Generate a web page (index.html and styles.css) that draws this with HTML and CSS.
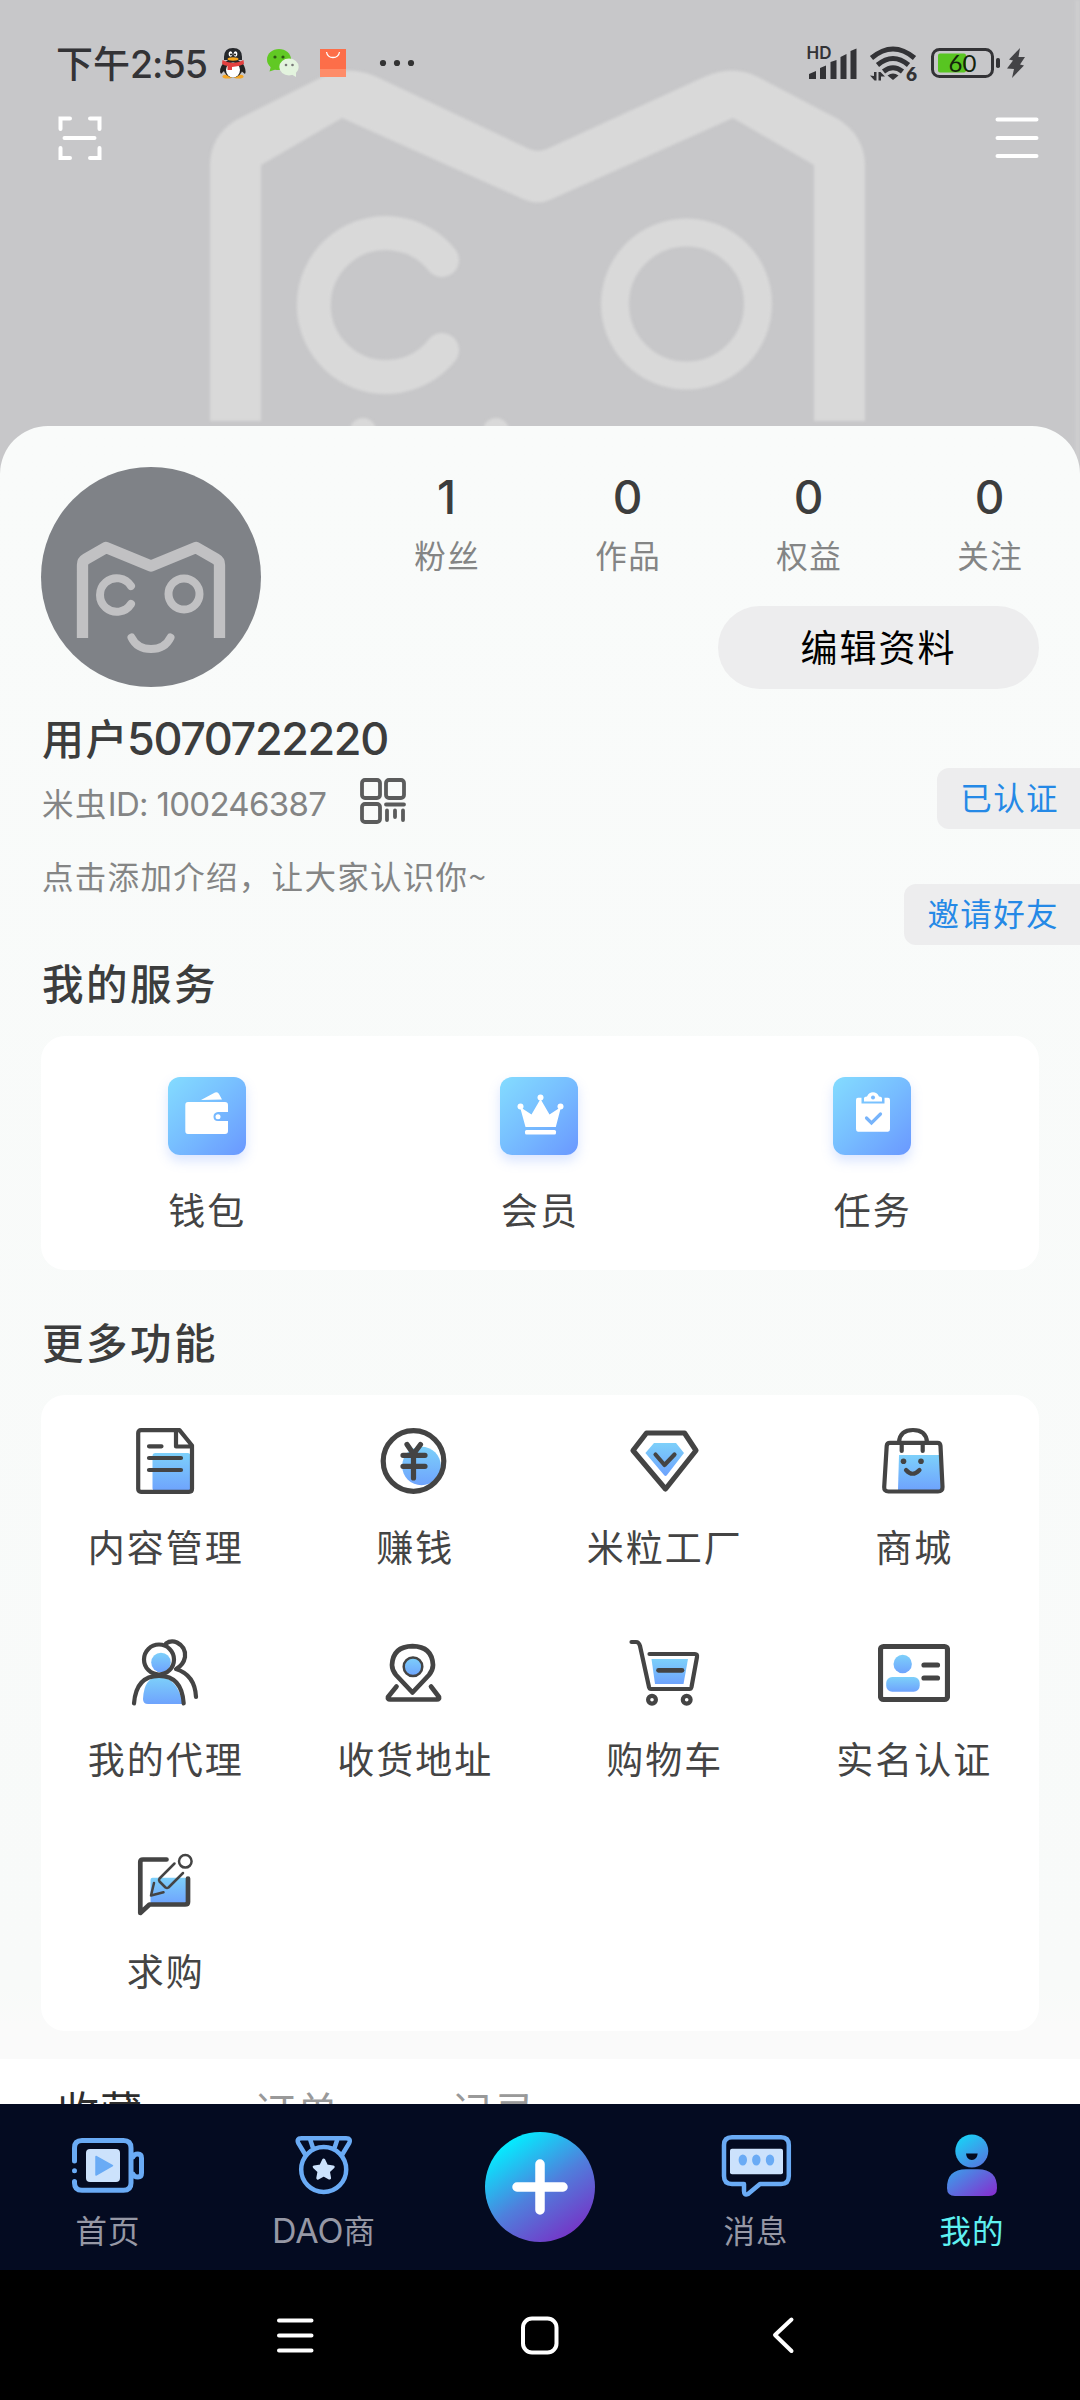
FILE: index.html
```html
<!DOCTYPE html>
<html lang="zh-CN">
<head>
<meta charset="utf-8">
<title>我的</title>
<link rel="stylesheet" href="styles.css">
</head>
<body>
<svg class="defs" width="0" height="0" aria-hidden="true">
  <defs>
    <linearGradient id="blue" x1="0" y1="0" x2="0" y2="1"><stop offset="0" stop-color="#7dd0fa"/><stop offset="1" stop-color="#6ea3fd"/></linearGradient>
    <linearGradient id="neon" gradientUnits="userSpaceOnUse" x1="16" y1="6" x2="58" y2="66"><stop offset="0" stop-color="#0fe0fa"/><stop offset="1" stop-color="#8430cf"/></linearGradient>
  </defs>
</svg>
<div class="phone">
  <header class="hero">
    <svg class="hero-art" viewBox="0 0 1080 480" fill="#d9d9d9">
      <path d="M210 421V166Q210 136 236 120L322 77Q349 64 377 77L527 148Q538 154 549 148L704 77Q733 64 758 77L838 119Q865 136 865 166V421H814V165L733 118L552 199Q538 206 523 199L342 118L261 165V421Z"/>
      <path d="M442 260A72 72 0 1 0 442 350" fill="none" stroke="#d9d9d9" stroke-width="34" stroke-linecap="round"/>
      <circle cx="686.500" cy="304" r="71.500" fill="none" stroke="#d9d9d9" stroke-width="28"/>
      <circle cx="363" cy="431" r="13"/><circle cx="496" cy="431" r="13"/>
      <path d="M1075 0H1080V480H1075Z" fill="#cdcdce"/>
    </svg>
    <div class="statusbar">
      <span class="clock">下午<span class="digits">2:55</span></span>
      <svg class="notif" width="200" height="36" viewBox="216 45 200 36">
        <path d="M224 62Q218 70 221 74L225 70ZM242 62Q247 70 245 74L240 70Z" fill="#222"/>
        <ellipse cx="227.500" cy="76.500" rx="5" ry="2" fill="#f5a623"/><ellipse cx="238.500" cy="76.500" rx="5" ry="2" fill="#f5a623"/>
        <ellipse cx="233" cy="68" rx="9.500" ry="9.500" fill="#222"/>
        <ellipse cx="233" cy="70" rx="7" ry="7.500" fill="#fff"/>
        <path d="M224 60V57Q224 48 233 48Q242 48 242 57V60Z" fill="#26282c"/>
        <ellipse cx="230.500" cy="54" rx="1.900" ry="2.700" fill="#fff"/><ellipse cx="235.500" cy="54" rx="1.900" ry="2.700" fill="#fff"/>
        <circle cx="231" cy="54.500" r=".9"/><circle cx="235" cy="54.500" r=".9"/>
        <path d="M222.500 60Q233 66 243.500 60L244 64Q238 67 232 67V70H227.500V66Q223 65 222 63.500Z" fill="#e2403f"/>
        <ellipse cx="233" cy="59" rx="5.500" ry="1.700" fill="#f7a51c"/>
        <ellipse cx="279" cy="59.500" rx="12" ry="10.500" fill="#61c924"/><path d="M271 66L269.500 71.500L277 69Z" fill="#61c924"/>
        <circle cx="275" cy="57" r="1.600" fill="#2d5a12"/><circle cx="283" cy="57" r="1.600" fill="#2d5a12"/>
        <ellipse cx="289" cy="67" rx="9.700" ry="8.500" fill="#e3f3de"/><path d="M291 74L296 77L296 71Z" fill="#e3f3de"/>
        <circle cx="286" cy="65" r="1.300" fill="#777"/><circle cx="292.500" cy="65" r="1.300" fill="#777"/>
        <path d="M320 49H346V77H320Z" fill="#fd6e49"/><path d="M320 69H346V77H320Z" fill="#fe8c69"/>
        <path d="M326.500 52Q327.500 57.500 333 57.500T339.500 52" fill="none" stroke="#fff" stroke-width="1.300"/>
        <circle cx="383" cy="63" r="3.100" fill="#333"/><circle cx="397" cy="63" r="3.100" fill="#333"/><circle cx="411" cy="63" r="3.100" fill="#333"/>
      </svg>
      <svg class="signals" width="224" height="40" viewBox="804 43 224 40" fill="#333336">
        <text x="806.500" y="59" class="t-hd">HD</text>
        <path d="M809 79V74L816 71V79ZM820 79V68L826 65.500V79ZM830.500 79V62L836.500 60V79ZM840.500 79V57L846.500 54V79ZM850.500 79V51L856.500 48.500V79Z"/>
        <g fill="none" stroke="#333336" stroke-width="5"><path d="M871.500 58Q893 40 914.500 58"/><path d="M877.500 65Q893 52 908.500 65"/><path d="M883.500 71.500Q893 64 902.500 71.500"/></g>
        <path d="M887.500 75.500Q893 71.500 898.500 75.500L893 80Z"/>
        <path d="M876.500 80.500V72H874V76L870 75.500L874.500 80.500ZM878.500 72V80.500H881V76.500L885 76.500L880.500 72Z"/>
        <text x="906" y="81" class="t-gen">6</text>
        <rect x="932.500" y="49.500" width="60" height="27" rx="7" fill="none" stroke="#333336" stroke-width="3"/>
        <rect x="938" y="53.500" width="28" height="19" rx="2" fill="#58c521"/>
        <rect x="996" y="58" width="4" height="10" rx="1.800"/>
        <text x="948.500" y="72" class="t-batt">60</text>
        <path d="M1020 48L1009 59.500L1013 60.500L1007 68.500L1014 69L1012 78L1024 65.500L1020 64.500L1025 57H1018.500Z" fill="#434346"/>
      </svg>
    </div>
    <div class="toolbar">
      <svg width="44" height="45" viewBox="0 0 44 45" fill="none" stroke="#fff" stroke-width="4" stroke-linecap="round"><path d="M2.500 13V2.500H12M32 2.500H41.500V13M2.500 32V42H12M32 42H41.500V32M6.500 22H36.500"/></svg>
      <svg width="44" height="45" viewBox="0 0 44 45" fill="none" stroke="#fff" stroke-width="4" stroke-linecap="round"><path d="M2.500 3.500H41.500M2.500 22H41.500M2.500 40H41.500"/></svg>
    </div>
  </header>

  <main class="sheet">
    <section class="top">
      <svg class="avatar" viewBox="0 0 220 220" fill="none" stroke="#c1c1c3">
        <circle cx="110" cy="110" r="110" fill="#7f8287" stroke="none"/>
        <path d="M41.500 171V98Q41.500 94 45 92L65 80.500L110 99L155 80.500L175 92Q178.500 94 178.500 98V171" stroke-width="11.300" stroke-linejoin="round"/>
        <path d="M90 119A16.800 16.800 0 1 0 90 137" stroke-width="8" stroke-linecap="round"/>
        <circle cx="143" cy="127" r="15.500" stroke-width="8"/>
        <path d="M90.500 170.500Q96 182 110 182T129.500 170.500" stroke-width="8" stroke-linecap="round"/>
      </svg>
      <div class="top-right">
        <div class="stats">
          <div class="stat"><b>1</b><span>粉丝</span></div>
          <div class="stat"><b>0</b><span>作品</span></div>
          <div class="stat"><b>0</b><span>权益</span></div>
          <div class="stat"><b>0</b><span>关注</span></div>
        </div>
        <div class="edit">编辑资料</div>
      </div>
    </section>
    <h1 class="name">用户<span class="digits">5070722220</span></h1>
    <section class="meta">
      <div class="meta-text">
        <div class="uid"><span class="uid-text">米虫<span class="digits">ID: 100246387</span></span>
          <svg width="46" height="46" viewBox="0 0 46 46" fill="none" stroke="#5b5c5c" stroke-width="3.800" stroke-linecap="round"><rect x="2" y="2" width="18" height="18" rx="3"/><rect x="26" y="2" width="18" height="18" rx="3"/><rect x="2" y="26" width="18" height="18" rx="3"/><path d="M26 26.500H44M27 32.500V42M35 32.500V39M43 32.500V42"/></svg>
        </div>
        <p class="bio">点击添加介绍，让大家认识你~</p>
      </div>
      <div class="badges"><span class="badge">已认证</span><span class="badge">邀请好友</span></div>
    </section>

    <h2 class="title">我的服务</h2>
    <section class="card services">
      <div class="service">
        <svg class="tile" viewBox="0 0 78 78" fill="#fff"><path d="M33 23L47 15.500Q50 14.500 51 17L54 22.500ZM20 25H57Q60 25 60 28V35H50Q45.500 35.500 45.500 39.700T50 44H60V54Q60 57 57 57H20Q17.300 57 17.300 54V28Q17.300 25 20 25Z"/><circle cx="50" cy="39.700" r="2.500"/></svg>
        <span>钱包</span>
      </div>
      <div class="service">
        <svg class="tile" viewBox="0 0 78 78" fill="#fff"><path d="M20 30L31.500 37.500L40.500 22L49.500 37.500L61 30L55.800 50H25.500Z"/><circle cx="20.500" cy="29.500" r="3"/><circle cx="40.500" cy="20.500" r="3"/><circle cx="60.500" cy="29.500" r="3"/><rect x="25" y="53" width="31" height="4.500" rx="1.500"/></svg>
        <span>会员</span>
      </div>
      <div class="service">
        <svg class="tile" viewBox="0 0 78 78"><path d="M25 20.700H28.500V26.500H51.500V20.700H55Q57 20.700 57 23V52Q57 54.700 55 54.700H25Q23 54.700 23 52V23Q23 20.700 25 20.700Z" fill="#fff"/><path d="M31 24.500V21.500Q31 19.500 34 19.500Q36 15.300 40 15.300T46 19.500Q49 19.500 49 21.500V24.500Z" fill="#fff"/><circle cx="40" cy="20.500" r="2" fill="#79baff"/><path d="M33.500 41L38.500 46L47.500 37" fill="none" stroke="#77b4fb" stroke-width="3.200" stroke-linecap="round"/></svg>
        <span>任务</span>
      </div>
    </section>

    <h2 class="title title-more">更多功能</h2>
    <section class="card features">
      <div class="feature">
        <svg viewBox="0 0 72 72"><rect class="tint" x="22.500" y="28" width="38" height="38" rx="3"/><path d="M11 5.200H49.500L62 20.500V64Q62 66.800 59 66.800H11Q8.200 66.800 8.200 64V8Q8.200 5.200 11 5.200ZM46 6V21.500H61M19 21.300H31.500M19 33H51M19 45H51"/></svg>
        <span>内容管理</span>
      </div>
      <div class="feature">
        <svg viewBox="0 0 72 72"><circle class="tint" cx="42.500" cy="41" r="19.300"/><g class="bold"><circle cx="34.500" cy="36" r="30.300"/><path d="M28 19.500L34.500 29L41.500 19.500M34.500 29V53M24 30.300H46M24 41.300H46"/></g></svg>
        <span>赚钱</span>
      </div>
      <div class="feature">
        <svg viewBox="0 0 72 72"><path class="tint" d="M25 18H47L55 28L38 50Q36.500 52 35 50L16.400 28Z"/><path class="bold" d="M17.500 8H55.500L67 25.500L36.500 64L4 25.500Z"/><path d="M26.500 29.500L35.500 40L45.500 29.500"/></svg>
        <span>米粒工厂</span>
      </div>
      <div class="feature">
        <svg viewBox="0 0 72 72"><path class="tint" d="M21 30H62L63 65H20Z"/><path d="M12 17.800H59.500Q62.300 17.800 62.500 21L64.500 62Q64.700 66.500 60 66.500H10.500Q6 66.500 6.200 62L8.700 21Q9 17.800 12 17.800ZM21 17Q22 5 35 5T49 17M23.700 18V26M44.700 18V26"/><circle class="dot" cx="25.500" cy="36.300" r="2.800"/><circle class="dot" cx="43" cy="36.300" r="2.800"/><path d="M28 45Q34.500 52.500 41.500 45"/></svg>
        <span>商城</span>
      </div>
      <div class="feature">
        <svg viewBox="0 0 72 72"><circle class="tint" cx="31" cy="25.500" r="9.800"/><path class="tint" d="M18 67Q13 67 13 62Q14 40 29 40Q47 40 53 67Z"/><path d="M4 66.500Q6 38.800 29 38.800T53.700 66.500M36 6.500Q41 3 47 5.500Q56 10 55 20Q53.500 28 46 32Q65 38 66 60"/><circle cx="29" cy="22.500" r="15"/></svg>
        <span>我的代理</span>
      </div>
      <div class="feature">
        <svg viewBox="0 0 72 72"><circle class="tint" cx="34" cy="29.700" r="9.300"/><circle class="thin" cx="34" cy="29.700" r="9.300"/><path class="medium" d="M33.500 55.500L17 38Q13 33 13 28Q14 9.500 33.500 9.200Q53 9.500 54 28Q54 33 50 38ZM17.500 49.500L9 60Q8.500 62.500 11 62.500H58Q60.500 62.500 60 60L52 49.500"/></svg>
        <span>收货地址</span>
      </div>
      <div class="feature">
        <svg viewBox="0 0 72 72"><path class="tint" d="M22.500 22H59L54.500 47H26Z"/><path d="M2.500 5H7Q10 5 11 9L20 50Q20.500 52 22 52H60.500Q62 52 62.500 50L68 20Q68.500 17 66 17H20.500"/><path class="medium" d="M29.500 33.300H53"/><circle cx="23" cy="62.700" r="3.900"/><circle cx="57.700" cy="62.700" r="3.900"/></svg>
        <span>购物车</span>
      </div>
      <div class="feature">
        <svg viewBox="0 0 72 72"><circle class="tint" cx="24.700" cy="27" r="9.200"/><rect class="tint" x="8.200" y="40" width="33.500" height="14.700" rx="6"/><g class="bold"><rect x="2.500" y="9.500" width="67" height="53" rx="3"/><path d="M46 28H59.500M46 41H59.500"/></g></svg>
        <span>实名认证</span>
      </div>
      <div class="feature">
        <svg viewBox="0 0 72 72"><rect class="tint" x="20.500" y="28.700" width="37" height="26" rx="2"/><path class="medium" d="M36.500 10.500H13Q10.300 10.500 10.300 13V64L19.500 55.500H55Q58 55.500 58 53V29.500"/><g class="thin"><circle cx="55.300" cy="12.300" r="6.300"/><path d="M44.500 14.500L29.500 29.500Q28.500 31 29.500 32.500L35.500 38.500Q37 39.500 38.500 38.500L53 24M24 34L21 46.500L33.500 43.300"/></g></svg>
        <span>求购</span>
      </div>
    </section>
  </main>

  <div class="tabs"><span class="tab tab-on">收藏</span><span class="tab">订单</span><span class="tab">记录</span></div>

  <nav class="nav">
    <div class="nav-item">
      <svg viewBox="0 0 72 72" fill="none" stroke="#6aabf5" stroke-width="5" stroke-linecap="round"><rect x="14" y="20" width="34" height="33" rx="4" fill="#cce2fc" stroke="none"/><path d="M24 27.500V46L40.500 36.700Z" fill="#6aabf5" stroke-width="1.500" stroke-linejoin="round"/><path d="M2.500 32V19Q2.500 11.500 10 11.500H51.500Q59 11.500 59 19V54Q59 61.300 51.500 61.300H10Q2.500 61.300 2.500 54V52.500M2.500 41.700V41.800M61 28Q62 25 66 25Q69.500 25 69.500 29V44Q69.500 48 66 48Q62 48 61 45"/></svg>
      <span>首页</span>
    </div>
    <div class="nav-item">
      <svg viewBox="0 0 72 72" fill="none" stroke="#6aabf5" stroke-width="4.500"><circle cx="35.700" cy="40.500" r="22.500"/><path d="M17.500 26L10.500 14.500Q8 9.200 13.500 9.200H58Q63.500 9.200 61 14.500L54 26M22 10L25 19M49.500 10L46.500 19"/><path d="M35.700 31L38.600 37L45.200 37.900L40.400 42.500L41.600 49.100L35.700 46L29.800 49.100L31 42.500L26.200 37.900L32.800 37Z" fill="#cce2fc" stroke="#cce2fc" stroke-width="3" stroke-linejoin="round"/></svg>
      <span><span class="digits">DAO</span>商</span>
    </div>
    <div class="nav-item"><div class="plus"><svg width="110" height="110" viewBox="0 0 110 110" stroke="#fff" stroke-width="9.500" stroke-linecap="round"><path d="M32 55H78M55 32V78"/></svg></div></div>
    <div class="nav-item">
      <svg viewBox="0 0 72 72" fill="none" stroke="#6aabf5" stroke-width="4.500" stroke-linejoin="round"><path d="M12 8.200H61Q68.800 8.200 68.800 16V47Q68.800 55 61 55H40L28 65Q24 67 24 62V55H12Q4 55 4 47V16Q4 8.200 12 8.200Z"/><rect x="10" y="19.700" width="53" height="25.500" rx="2" fill="#cce2fc" stroke="none"/><g fill="#6aabf5" stroke="none"><ellipse cx="22.800" cy="31" rx="4.200" ry="5.500"/><ellipse cx="36.300" cy="31" rx="4.200" ry="5.500"/><ellipse cx="50" cy="31" rx="4.200" ry="5.500"/></g></svg>
      <span>消息</span>
    </div>
    <div class="nav-item active">
      <svg viewBox="0 0 72 72" fill="url(#neon)"><circle cx="35.800" cy="22" r="16.500"/><path d="M30 24.500H41.700Q41 31 35.800 31T30 24.500Z" fill="#040a20"/><path d="M11 59Q11 40.300 30 40.300H42Q61 40.300 61 59Q61 67 53 67H19Q11 67 11 59Z"/></svg>
      <span>我的</span>
    </div>
  </nav>

  <footer class="sysnav">
    <svg width="44" height="44" viewBox="0 0 44 44"><path d="M5 6.500H37.500M5 21.500H37.500M5 36.500H37.500"/></svg>
    <svg width="44" height="44" viewBox="0 0 44 44"><rect x="5" y="4.500" width="33.500" height="34" rx="9"/></svg>
    <svg width="44" height="44" viewBox="0 0 44 44"><path d="M29.500 5.500L13 21L29.500 37"/></svg>
  </footer>
</div>
</body>
</html>
```
FILE: styles.css
```css
* { box-sizing: border-box; margin: 0; padding: 0; }

body {
  background: #fff;
  font-family: "Noto Sans CJK SC", sans-serif;
  color: #3c3d3d;
}

svg { display: block; flex: none; }
.defs { position: absolute; }

/* Latin letters and digits beside Chinese text */
.digits { font-family: Inter, sans-serif; line-height: 1; }

.phone {
  width: 1080px;
  height: 2400px;
  display: flex;
  flex-direction: column;
  overflow: hidden;
}

/* cover */
.hero {
  position: relative;
  height: 480px;
  margin-bottom: -54px;
  background: #c7c7c9;
  flex: none;
}
.hero-art {
  position: absolute;
  inset: 0;
  width: 1080px;
  height: 480px;
  filter: blur(1.5px);
}
.statusbar {
  position: relative;
  display: flex;
  align-items: center;
  height: 116px;
  padding: 10px 52px 0 56px;
}
.clock {
  width: 160px;
  font-size: 37px;
  line-height: 50px;
  white-space: nowrap;
  color: #333336;
  padding-bottom: 3px;
  font-weight: 500;
}
.clock .digits { font-size: 37.5px; letter-spacing: -1px; }
.notif { margin-top: -1px; }
.signals { margin: -1px 0 0 auto; }
.t-hd { font: 600 17px Inter, sans-serif; }
.t-gen { font: 800 19px Lato, sans-serif; }
.t-batt { font: 400 24px Lato, sans-serif; fill: #14240c; }
.toolbar {
  position: relative;
  display: flex;
  justify-content: space-between;
  padding: 0 41px 0 58px;
}

/* profile sheet */
.sheet {
  position: relative;
  height: 1633px;
  flex: none;
  padding-top: 41px;
  border-radius: 48px 48px 0 0;
  background: linear-gradient(#f9fbfa, #f8faf9 1560px, #fafafa 1600px);
}
.top { display: flex; padding-left: 41px; height: 224px; }
.avatar { width: 220px; height: 220px; }
.top-right {
  flex: 1;
  display: flex;
  flex-direction: column;
  align-items: flex-end;
  padding-top: 3px;
}
.stats { display: grid; grid-template-columns: repeat(4, 181px); }
.stat { display: flex; flex-direction: column; align-items: center; gap: 15px; }
.stat b { font-family: Inter, sans-serif; font-size: 46px; line-height: 54px; margin-bottom: -5px; font-weight: 500; }
.stat span {
  font-size: 31.5px;
  line-height: 40px;
  letter-spacing: 1.5px;
  margin-right: -1.5px;
  color: #848585;
}
.edit {
  width: 321px;
  height: 83px;
  margin: 32px 41px 0 0;
  border-radius: 42px;
  background: #ededee;
  color: #000;
  font-size: 37px;
  line-height: 80px;
  letter-spacing: 2px;
  text-align: center;
}
.name {
  margin: 18px 0 -1px 42px;
  font-size: 42px;
  line-height: 56px;
  font-weight: 500;
  letter-spacing: 1.5px;
}
.name .digits { font-size: 45px; letter-spacing: -1.4px; margin-left: -2px; }
.meta { display: flex; justify-content: space-between; height: 181px; }
.meta-text {
  padding: 15px 0 0 42px;
  font-size: 31.5px;
  line-height: 46px;
  letter-spacing: 1.4px;
  color: #848585;
}
.uid { display: flex; height: 46px; }
.uid svg { margin-top: -1px; }
.uid-text { width: 318px; white-space: nowrap; }
.uid .digits { font-size: 33px; letter-spacing: -0.7px; }
.bio { margin-top: 27px; letter-spacing: 1.3px; }
.badges {
  display: flex;
  flex-direction: column;
  align-items: flex-end;
  gap: 55px;
  padding-top: 4px;
}
.badge {
  height: 61px;
  padding: 0 21px 0 23px;
  border-radius: 12px 0 0 12px;
  background: #ededee;
  color: #2589e6;
  font-size: 31.5px;
  line-height: 57px;
  letter-spacing: 1.4px;
}
.title {
  margin: 9px 0 26px 42px;
  font-size: 41.5px;
  line-height: 56px;
  font-weight: 500;
  letter-spacing: 2.5px;
}
.title-more { margin-top: 43px; }
.card { margin: 0 41px; border-radius: 24px; background: #fff; }
.services, .features {
  display: grid;
  grid-template-columns: repeat(3, 1fr);
  height: 234px;
  font-size: 37px;
  line-height: 50px;
  letter-spacing: 2px;
  color: #444;
}
.features { grid-template-columns: repeat(4, 1fr); height: 636px; }
.service, .feature { display: flex; flex-direction: column; align-items: center; }
.service { padding-top: 41px; gap: 29px; }
.feature { padding-top: 30px; gap: 24px; height: 212px; }
.tile {
  width: 78px;
  height: 78px;
  margin-right: 1px;
  border-radius: 12px;
  background: linear-gradient(135deg, #84dcff, #78c0ff 45%, #6a98ff);
  box-shadow: 0 6px 12px rgba(106, 152, 255, 0.25);
}
.feature svg {
  width: 72px;
  height: 72px;
  fill: none;
  stroke: #444;
  stroke-width: 4.2px;
  stroke-linecap: round;
  stroke-linejoin: round;
}
.feature .tint { fill: url(#blue); stroke: none; }
.feature .dot { fill: #444; stroke: none; }
.feature .bold { stroke-width: 5.2px; }
.feature .medium { stroke-width: 4.7px; }
.feature .thin { stroke-width: 2.5px; }

/* content tabs, cut off by the navigation bar */
.tabs {
  display: flex;
  gap: 111px;
  height: 45px;
  padding: 20px 0 0 57px;
  overflow: hidden;
  flex: none;
  background: #fff;
}
.tab { font-size: 41px; line-height: 60px; letter-spacing: 2px; color: #999; }
.tab-on { color: #2e2e2e; font-size: 42px; letter-spacing: 1px; }

/* app navigation */
.nav {
  display: grid;
  grid-template-columns: repeat(5, 1fr);
  height: 166px;
  flex: none;
  background: #040b21;
}
.nav-item {
  display: flex;
  flex-direction: column;
  align-items: center;
  gap: 8px;
  padding-top: 25px;
  font-size: 31.5px;
  line-height: 40px;
  letter-spacing: 1px;
  color: #9698a5;
}
.nav-item > svg { width: 72px; height: 72px; }
.nav-item .digits { font-size: 34px; letter-spacing: 0; }
.active { color: #5ff1f1; }
.plus {
  width: 110px;
  height: 110px;
  margin-top: 3px;
  border-radius: 50%;
  background: linear-gradient(145deg, #04ecff 14%, #4f7fdc 52%, #7a2cc4 92%);
}

.sysnav {
  display: flex;
  justify-content: center;
  gap: 200px;
  flex: 1;
  padding-top: 44px;
  background: #000;
}
.sysnav svg { fill: none; stroke: #fff; stroke-width: 4px; stroke-linecap: round; stroke-linejoin: round; }
```
